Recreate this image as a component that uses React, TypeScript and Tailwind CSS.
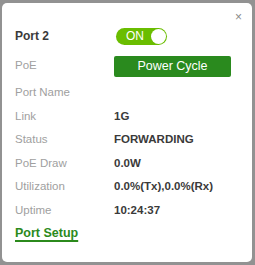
import React from "react";

const rows: [string, string][] = [
  ["Port Name", ""],
  ["Link", "1G"],
  ["Status", "FORWARDING"],
  ["PoE Draw", "0.0W"],
  ["Utilization", "0.0%(Tx),0.0%(Rx)"],
  ["Uptime", "10:24:37"],
];

export default function App() {
  return (
    <div
      className="w-[255px] h-[265px] bg-[#929292] overflow-hidden pt-[3px] pl-[2px]"
      style={{ fontFamily: '"Liberation Sans", Arial, sans-serif' }}
    >
      <div className="relative w-[250px] h-[259px] bg-white rounded-[5px] pl-[13px] pt-[24px] text-[11.5px]">
        <div className="absolute top-[8px] right-[10px] text-[12px] leading-none text-[#8a8a8a]">×</div>
        <div className="flex items-center h-[18px]">
          <div className="w-[99px] font-bold text-[12px] text-[#3a3a3a]">Port 2</div>
          <div className="ml-[2px] w-[51px] h-[17px] rounded-full bg-[#6abd00] flex items-center justify-between pl-[10px] pr-[1px]">
            <span className="text-white text-[12px] leading-none">ON</span>
            <span className="w-[15px] h-[15px] rounded-full bg-white"></span>
          </div>
        </div>
        <div className="flex items-center h-[22px] mt-[10px]">
          <div className="w-[99px] text-[#a0a0a0]">PoE</div>
          <div className="w-[117px] h-[21px] bg-[#2a8a1e] rounded-[2px] flex items-center justify-center text-white text-[12.5px]">
            Power Cycle
          </div>
        </div>
        <div className="mt-[4px]">
          {rows.map(([k, v]) => (
            <div key={k} className="flex items-center h-[23.5px]">
              <div className="w-[99px] text-[#a0a0a0]">{k}</div>
              <div className="font-bold text-[#3a3a3a]">{v}</div>
            </div>
          ))}
          <div className="flex items-center h-[23.5px]">
            <span className="font-bold text-[12.5px] text-[#2b8a1c] underline decoration-2 underline-offset-[3px]">Port Setup</span>
          </div>
        </div>
      </div>
    </div>
  );
}
